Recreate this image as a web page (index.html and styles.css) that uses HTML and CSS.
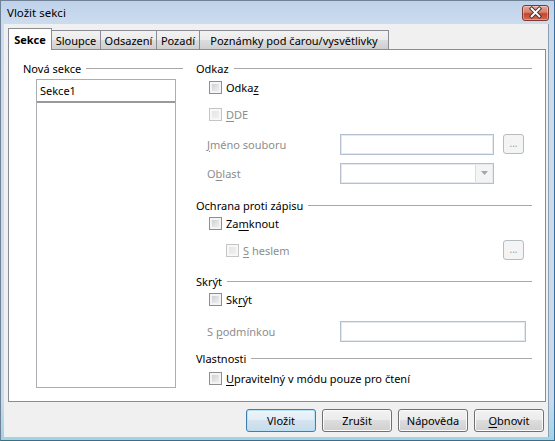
FILE: index.html
```html
<!DOCTYPE html>
<html lang="cs">
<head>
<meta charset="utf-8">
<title>Vložit sekci</title>
<link rel="stylesheet" href="styles.css">
</head>
<body>
<div class="window">
  <div class="titlebar">
    <span class="title">Vložit sekci</span>
    <div class="close">
      <svg width="26" height="15" viewBox="0 0 26 15">
        <path d="M9 3.5 L17 11.5 M17 3.5 L9 11.5" stroke="#3a3a3a" stroke-width="4" stroke-linecap="square"/>
        <path d="M9 3.5 L17 11.5 M17 3.5 L9 11.5" stroke="#ffffff" stroke-width="2" stroke-linecap="square"/>
      </svg>
    </div>
  </div>
  <div class="client">
    <div class="tabs">
      <div class="tab active t1">Sekce</div>
      <div class="tab t2">Sloupce</div>
      <div class="tab t3">Odsazení</div>
      <div class="tab t4">Pozadí</div>
      <div class="tab t5">Poznámky pod čarou/vysvětlivky</div>
    </div>
    <div class="panel">
      <div class="col-left">
        <div class="ghead"><span>Nová sekce</span><i></i></div>
        <div class="listbox">
          <div class="entry">Sekce1</div>
          <div class="list"></div>
        </div>
      </div>
      <div class="col-right">
        <div class="ghead"><span>Odkaz</span><i></i></div>
        <div class="check r-odkaz"><span class="cb"></span><span>Odka<u>z</u></span></div>
        <div class="check disabled r-dde"><span class="cb"></span><span><u>D</u>DE</span></div>
        <div class="field r-file">
          <span class="flabel disabled"><u>J</u>méno souboru</span>
          <span class="input"></span>
          <span class="dots">...</span>
        </div>
        <div class="field r-area">
          <span class="flabel disabled">O<u>b</u>last</span>
          <span class="input combo"><span class="drop"><svg width="7" height="4" viewBox="0 0 7 4"><path d="M0 0 H7 L3.5 4 Z" fill="#a6a6a6"/></svg></span></span>
        </div>
        <div class="ghead r-prot"><span>Ochrana proti zápisu</span><i></i></div>
        <div class="check r-lock"><span class="cb"></span><span>Za<u>m</u>knout</span></div>
        <div class="check disabled sub r-pass"><span class="cb"></span><span><u>S</u> heslem</span><span class="dots push">...</span></div>
        <div class="ghead r-hide"><span>Skrýt</span><i></i></div>
        <div class="check r-hidecb"><span class="cb"></span><span>Sk<u>r</u>ýt</span></div>
        <div class="field r-cond">
          <span class="flabel disabled">S <u>p</u>odmínkou</span>
          <span class="input wide"></span>
        </div>
        <div class="ghead r-props"><span>Vlastnosti</span><i></i></div>
        <div class="check r-edit"><span class="cb"></span><span><u>U</u>pravitelný v módu pouze pro čtení</span></div>
      </div>
    </div>
    <div class="buttons">
      <div class="btn default">Vložit</div>
      <div class="btn">Zrušit</div>
      <div class="btn">Nápověda</div>
      <div class="btn"><u>O</u>bnovit</div>
    </div>
  </div>
</div>
</body>
</html>
```
FILE: styles.css
```css
* { box-sizing: border-box; }
html, body { margin: 0; padding: 0; }
body {
  font-family: "Noto Sans", "Open Sans", sans-serif;
  font-size: 11px;
  color: #000;
  background: #fff;
}
u { text-decoration: underline; text-underline-offset: 2px; }

.window {
  width: 555px;
  height: 441px;
  border: 1px solid #6f8296;
  border-right-color: #3a6f99;
  border-bottom-color: #3c6f86;
  background: linear-gradient(to bottom, #bfd2ea 0px, #cddcef 24px, #c9dbee 400px, #9fd3e6 100%);
  display: flex;
  flex-direction: column;
}

.titlebar {
  height: 23px;
  display: flex;
  align-items: center;
  justify-content: space-between;
  padding: 0 5px 0 6px;
}
.title { font-size: 11.5px; color: #000; line-height: 1; margin-top: 1px; }
.close {
  width: 27px;
  height: 16px;
  margin-top: 0px;
  border: 1px solid #7d3a32;
  border-radius: 3px;
  background: linear-gradient(to bottom, #e8a493 0%, #d7806c 45%, #c4452e 55%, #d5694f 100%);
  box-shadow: inset 0 0 0 1px rgba(255,255,255,0.35);
  display: flex;
  align-items: center;
  justify-content: center;
}
.close svg { display: block; }

.client {
  flex: 1;
  margin: 0 5px 3px 3px;
  background: #f0f0f0;
  border-right: 1px solid #8ea0b4;
  display: flex;
  flex-direction: column;
}

/* tabs */
.tabs {
  margin-top: 4px;
  padding-left: 4px;
  height: 21px;
  display: flex;
  align-items: flex-end;
  position: relative;
  z-index: 2;
}
.tab {
  height: 19px;
  border: 1px solid #898c95;
  border-bottom: none;
  margin-left: -1px;
  background: linear-gradient(to bottom, #f2f2f2 0%, #ebebeb 50%, #dddddd 51%, #cfcfcf 100%);
  display: flex;
  align-items: center;
  justify-content: center;
  white-space: nowrap;
  line-height: 1;
}
.tab:first-child { margin-left: 0; }
.tab.active {
  height: 22px;
  margin-bottom: -1px;
  background: #fff;
  font-weight: bold;
  position: relative;
  z-index: 3;
}
.t1 { width: 44px; }
.t2 { width: 50px; }
.t3 { width: 57px; }
.t4 { width: 44px; }
.t5 { width: 190px; }

/* panel */
.panel {
  margin-left: 4px;
  width: 538px;
  height: 353px;
  border: 1px solid #898c95;
  background: #fff;
  display: flex;
  padding: 10px 13px 0 14px;
  gap: 13px;
}
.col-left { width: 160px; display: flex; flex-direction: column; }
.col-right { width: 336px; display: flex; flex-direction: column; }

.ghead {
  height: 16px;
  display: flex;
  align-items: center;
  white-space: nowrap;
}
.ghead i {
  flex: 1;
  height: 1px;
  background: #a9a9a9;
  margin-left: 5px;
}

.listbox {
  margin: 3px 0 0 13px;
  width: 140px;
  height: 309px;
  border: 1px solid #abadb3;
  display: flex;
  flex-direction: column;
}
.entry {
  height: 23px;
  padding-left: 3px;
  display: flex;
  align-items: center;
  border-bottom: 2px solid #9a9a9a;
}
.list { flex: 1; }

.check {
  height: 20px;
  display: flex;
  align-items: center;
  padding-left: 13px;
}
.check.sub { padding-left: 30px; height: 22px; }
.cb {
  width: 13px;
  height: 13px;
  border: 1px solid #8e8f8f;
  background: linear-gradient(135deg, #c3c7cd 0%, #e4e5e7 60%, #f4f4f4 100%);
  box-shadow: inset 0 0 0 2px #f4f4f4;
  margin-right: 4px;
  flex: none;
}
.disabled { color: #8d8d8d; }
.check.disabled .cb {
  border-color: #c5c5c5;
  background: linear-gradient(135deg, #e3e3e3 0%, #f2f2f2 100%);
  box-shadow: inset 0 0 0 2px #f7f7f7;
}

.field {
  height: 22px;
  display: flex;
  align-items: center;
  padding-left: 11px;
}
.flabel { width: 133px; white-space: nowrap; }
.input {
  width: 154px;
  height: 21px;
  border: 1px solid #b4c0cf;
  box-shadow: inset 0 0 0 1px #e4e9ef;
  background: #fff;
  position: relative;
}
.input.wide { width: 186px; }
.combo { display: flex; justify-content: flex-end; padding: 1px; }
.drop {
  width: 17px;
  height: 100%;
  background: #f4f4f4;
  border-left: 1px solid #dcdcdc;
  display: flex;
  align-items: center;
  justify-content: center;
}
.drop svg { display: block; }
.dots {
  width: 21px;
  height: 20px;
  margin-left: 9px;
  border: 1px solid #b7bcc0;
  border-radius: 3px;
  background: #f4f4f4;
  color: #9a9a9a;
  display: flex;
  align-items: center;
  justify-content: center;
  font-size: 10px;
  line-height: 1;
  padding-bottom: 2px;
}
.dots.push { margin-left: auto; margin-right: 8px; }

.r-odkaz { margin-top: 1px; }
.r-dde { margin-top: 7px; }
.r-file { margin-top: 9px; }
.r-area { margin-top: 7px; }
.r-prot { margin-top: 13px; }
.r-pass { margin-top: 6px; }
.r-hide { margin-top: 12px; }
.r-cond { margin-top: 11px; }
.r-props { margin-top: 8px; }
.r-edit { margin-top: 2px; }

/* buttons */
.buttons {
  margin-top: 7px;
  padding-right: 4px;
  display: flex;
  justify-content: flex-end;
  gap: 6px;
}
.btn {
  width: 70px;
  height: 23px;
  border: 1px solid #707070;
  border-radius: 3px;
  background: linear-gradient(to bottom, #f2f2f2 0%, #ebebeb 49%, #dddddd 50%, #cfcfcf 100%);
  box-shadow: inset 0 0 0 1px #fbfbfb;
  display: flex;
  align-items: center;
  justify-content: center;
  line-height: 1;
}
.btn.default {
  border-color: #3c7fb1;
  background: linear-gradient(to bottom, #eef5fa 0%, #e3edf5 49%, #d4e3ef 50%, #c9dbea 100%);
  box-shadow: inset 0 0 0 1px #b9e2f6;
}
```
